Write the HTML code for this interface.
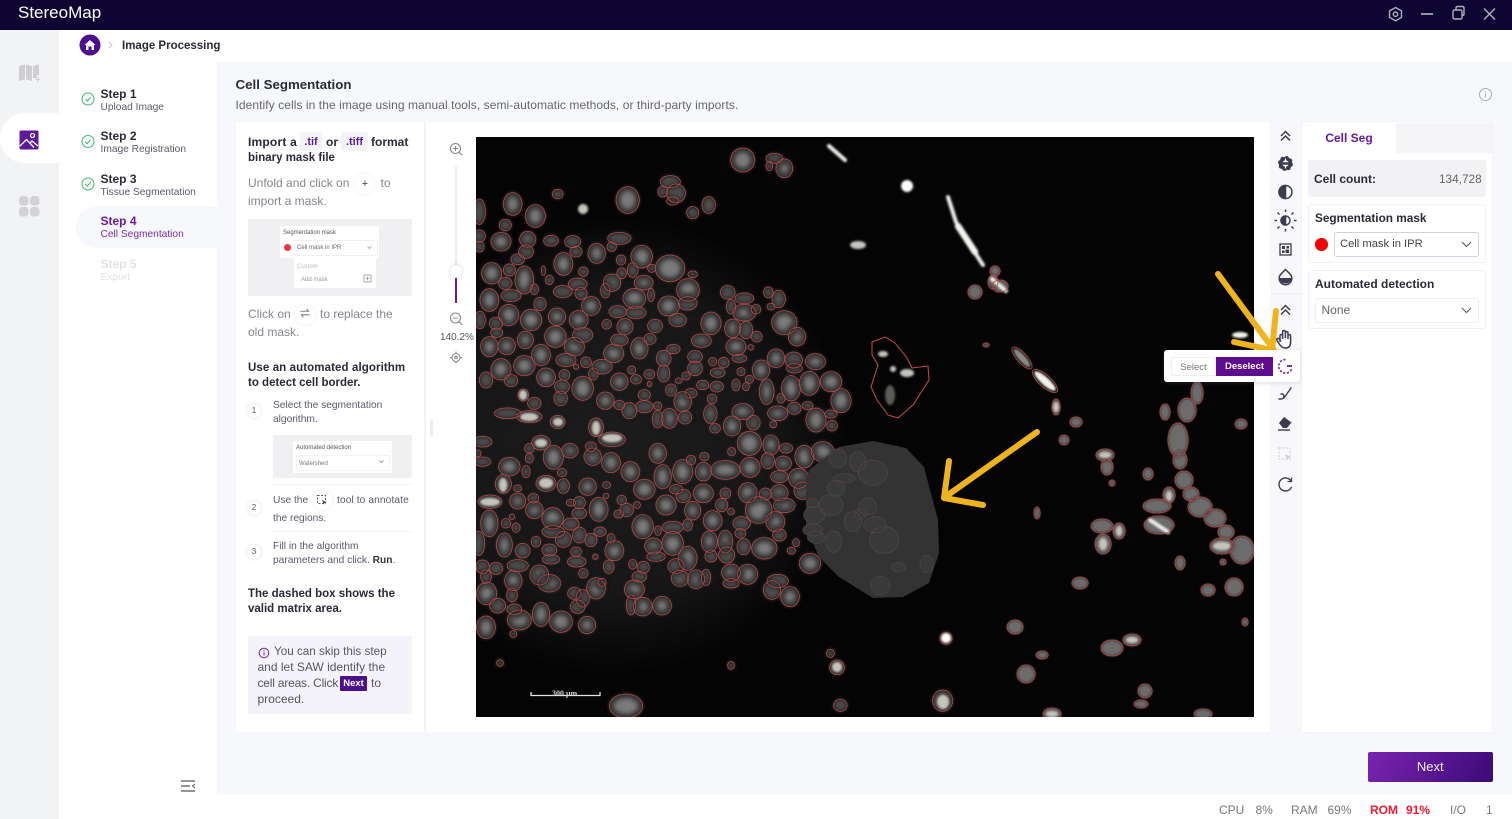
<!DOCTYPE html>
<html><head><meta charset="utf-8"><title>StereoMap</title>
<style>
html,body{margin:0;padding:0;width:1512px;height:819px;overflow:hidden;background:#f7f8fb;font-family:"Liberation Sans","Noto Sans CJK SC",sans-serif;color:#2b2b3a}
div,span,svg{position:absolute}
.t{white-space:nowrap;line-height:16px;font-size:12px}
.b{font-weight:700;color:#2a2a38}
.m{font-size:11.5px}
.g{color:#85858f}
.s{color:#5a5a6a;font-size:10.2px;margin-top:1px}
.n{width:14px;height:14px;border-radius:50%;background:#fff;box-shadow:0 0 3px rgba(80,80,120,.2);font-size:8px;line-height:14px;text-align:center;color:#555}
.c{width:20px;height:20px;border-radius:50%;background:#fff;box-shadow:0 0 3px rgba(80,80,120,.12);text-align:center;line-height:20px;font-size:11px;color:#444}
.p{background:#f4f4f8;color:#5e1a9e;font-weight:700;font-size:11px;text-align:center;line-height:21px;border-radius:2px}
</style></head><body>

<div style="left:0;top:0;width:1512px;height:30px;background:#0f0533"></div>
<div class="t" style="left:18px;top:4px;color:#fff;font-size:17px;line-height:18px">StereoMap</div>
<svg style="left:1380px;top:0" width="132" height="30" fill="none" stroke="#aeaeb8" stroke-width="1.4">
<path d="M15.500 7.500l6 3.400v6.500l-6 3.400-6-3.400v-6.500z"/><circle cx="15.500" cy="14.200" r="2.200"/>
<path d="M41 14h12" stroke-width="1.700"/><rect x="73" y="10" width="9" height="9" rx="1.500"/><path d="M76 10V8q0-1.500 1.500-1.500h5q1.500 0 1.500 1.500v6q0 1.500-1.500 1.500H82"/>
<path d="M104 8.500l11 11M115 8.500l-11 11" stroke-width="1.500"/></svg>

<div style="left:0;top:30px;width:59px;height:789px;background:#f2f3f5"></div>
<div style="left:59px;top:30px;width:158px;height:789px;background:#fff"></div>
<div style="left:59px;top:30px;width:1453px;height:32px;background:#fff"></div>
<div style="left:0;top:113px;width:60px;height:50px;background:#fff;border-radius:25px 0 0 25px"></div>
<svg style="left:17px;top:63px" width="26" height="22" fill="#cfcfd2"><path d="M2 3l6-1.500v15L2 18zM9 1.500l6 1.800v14.700l-6-1.500zM16 3l6-1.500V12h-2v3h-4z"/><path d="M21 14v5M18.500 16.500h5" stroke="#cfcfd2"/></svg>
<svg style="left:19px;top:130px" width="20" height="20"><rect width="19" height="19" rx="1.500" x=".5" y=".5" fill="#5c1a98"/><path d="M1 16L7.500 9.500l7.500 8M11 13l2-2 6 5" fill="none" stroke="#fff" stroke-width="1.300"/><circle cx="13.500" cy="5.500" r="2" fill="none" stroke="#fff" stroke-width="1.200"/></svg>
<svg style="left:19px;top:196px" width="21" height="21" fill="#d3d3d6"><rect width="9.500" height="9.500" rx="3.500"/><rect x="11" width="9.500" height="9.500" rx="3.500"/><rect y="11" width="9.500" height="9.500" rx="3.500"/><rect x="11" y="11" width="9.500" height="9.500" rx="3.500"/></svg>

<svg style="left:79px;top:34px" width="40" height="22"><circle cx="11" cy="11" r="10.500" fill="#4b0f8c"/><path d="M5.500 11L11 6l5.500 5h-1.500v5h-2.500v-3.500h-3V16H7v-5z" fill="#fff"/><path d="M30 8l3 3-3 3" fill="none" stroke="#c8c8cc" stroke-width="1"/></svg>
<div class="t b m" style="left:122px;top:37.500px">Image Processing</div>

<div style="left:76px;top:206px;width:141px;height:42px;background:#f7f8fb;border-radius:21px 0 0 21px"></div>
<svg style="left:80px;top:91px" width="16" height="100" fill="none" stroke="#3fb56f" stroke-width="1"><circle cx="8" cy="8" r="6"/><path d="M5.300 8l2 2 3.500-3.700"/><circle cx="8" cy="50.500" r="6"/><path d="M5.300 50.500l2 2 3.500-3.700"/><circle cx="8" cy="93" r="6"/><path d="M5.300 93l2 2 3.500-3.700"/></svg>
<div class="t b" style="left:100.500px;top:85.500px">Step 1</div><div class="t s" style="left:100.500px;top:98.500px">Upload Image</div>
<div class="t b" style="left:100.500px;top:128px">Step 2</div><div class="t s" style="left:100.500px;top:141px">Image Registration</div>
<div class="t b" style="left:100.500px;top:170.500px">Step 3</div><div class="t s" style="left:100.500px;top:183.500px">Tissue Segmentation</div>
<div class="t b" style="left:100.500px;top:213px;color:#6a1b9a">Step 4</div><div class="t s" style="left:100.500px;top:226px;color:#7b2cb0">Cell Segmentation</div>
<div class="t b" style="left:100.500px;top:255.500px;color:#e2e2e6">Step 5</div><div class="t s" style="left:100.500px;top:268.500px;color:#e2e2e6">Export</div>
<svg style="left:180px;top:779px" width="16" height="14" fill="none" stroke="#555" stroke-width="1.200"><path d="M1 2h14M1 7h9M1 12h14"/><path d="M15 5l-2.500 2 2.500 2" stroke-width="1"/></svg>

<div class="t b" style="left:235.500px;top:76.500px;font-size:13.300px">Cell Segmentation</div>
<div class="t" style="left:235.500px;top:97px;color:#666;letter-spacing:.07px">Identify cells in the image using manual tools, semi-automatic methods, or third-party imports.</div>
<svg style="left:1478px;top:87px" width="15" height="15" fill="none" stroke="#aaa"><circle cx="7.500" cy="7.500" r="6"/><path d="M7.500 6.500v4M7.500 4.200v1.200"/></svg>

<div style="left:236px;top:122px;width:1034px;height:610px;background:#fff"></div>
<div style="left:424px;top:122px;width:1.500px;height:610px;background:#f4f4f7"></div>

<div class="t b" style="left:248px;top:134px;letter-spacing:.2px">Import a</div>
<div class="p" style="left:300px;top:132px;width:22px;height:19px">.tif</div>
<div class="t b" style="left:326px;top:134px">or</div>
<div class="p" style="left:341px;top:132px;width:27px;height:19px">.tiff</div>
<div class="t b" style="left:371px;top:134px">format</div>
<div class="t b m" style="left:248px;top:149.500px">binary mask file</div>
<div class="t g" style="left:248px;top:175px">Unfold and click on</div>
<div class="c" style="left:355px;top:174px">+</div>
<div class="t g" style="left:380.500px;top:175px">to</div>
<div class="t g" style="left:248px;top:193px">import a mask.</div>

<div style="left:248px;top:219px;width:164px;height:77px;background:#f0f0f2"></div>
<div style="left:280px;top:226px;width:99px;height:32px;background:#fff"></div>
<div style="left:294px;top:258px;width:82px;height:30px;background:#fff"></div>
<div style="left:294px;top:240px;width:82px;height:14px;border:1px solid #f0f0f2"></div>
<div style="left:283.500px;top:243.500px;width:7px;height:7px;border-radius:50%;background:#f0324b"></div>
<div class="t" style="left:283px;top:225px;font-size:6px;color:#555">Segmentation mask</div>
<div class="t" style="left:297px;top:239.500px;font-size:6px;color:#666">Cell mask in IPR</div>
<div class="t" style="left:297px;top:258.500px;font-size:6px;color:#bbb">Custom</div>
<div class="t" style="left:301px;top:271.500px;font-size:6px;color:#999">Add mask</div>
<svg style="left:360px;top:243px" width="14" height="42" fill="none" stroke="#999" stroke-width=".8"><path d="M7.500 3.500l2 2 2-2"/><rect x="4" y="32" width="7" height="7"/><path d="M7.500 33.500v4M5.500 35.500h4"/></svg>

<div class="t g" style="left:248px;top:306px">Click on</div>
<div class="c" style="left:295px;top:305px;font-size:10px">⇌</div>
<div class="t g" style="left:320px;top:306px">to replace the</div>
<div class="t g" style="left:248px;top:324px">old mask.</div>

<div class="t b m" style="left:248px;top:359.500px;letter-spacing:.1px">Use an automated algorithm</div>
<div class="t b m" style="left:248px;top:375px">to detect cell border.</div>
<div class="n" style="left:247px;top:404px">1</div>
<div class="t s" style="left:273px;top:397px">Select the segmentation</div>
<div class="t s" style="left:273px;top:411px">algorithm.</div>
<div style="left:273px;top:435px;width:139px;height:43px;background:#f0f0f2"></div>
<div style="left:293px;top:441px;width:99px;height:32px;background:#fff"></div>
<div style="left:296px;top:455px;width:92px;height:14px;border:1px solid #f3f3f5"></div>
<div class="t" style="left:296px;top:440px;font-size:6px;color:#555">Automated detection</div>
<div class="t" style="left:299px;top:456px;font-size:6px;color:#777">Watershed</div>
<svg style="left:378px;top:459px" width="8" height="6" fill="none" stroke="#888" stroke-width=".8"><path d="M1.500 1.500l2 2 2-2"/></svg>
<div style="left:273px;top:484px;width:139px;height:1px;background:#f2f2f4"></div>
<div class="t s" style="left:273px;top:491.500px">Use the</div>
<div class="c" style="left:312px;top:490px"></div>
<svg style="left:316px;top:494px" width="12" height="12" fill="none" stroke="#555" stroke-width="1" stroke-dasharray="2 1.500"><rect x="1.500" y="1.500" width="8" height="8"/><path d="M6 6l4.500 2-2 .7-.7 2z" fill="#444" stroke="none"/></svg>
<div class="t s" style="left:337px;top:491.500px;letter-spacing:.1px">tool to annotate</div>
<div class="n" style="left:247px;top:501px">2</div>
<div class="t s" style="left:273px;top:509.500px">the regions.</div>
<div style="left:273px;top:531px;width:139px;height:1px;background:#f2f2f4"></div>
<div class="n" style="left:247px;top:545px">3</div>
<div class="t s" style="left:273px;top:537.500px">Fill in the algorithm</div>
<div class="t s" style="left:273px;top:551.500px">parameters and click. <b style="color:#333">Run</b>.</div>
<div class="t b m" style="left:248px;top:585.500px">The dashed box shows the</div>
<div class="t b m" style="left:248px;top:601px">valid matrix area.</div>

<div style="left:248px;top:636px;width:164px;height:78px;background:#f5f3fa"></div>
<svg style="left:258px;top:647px" width="12" height="12" fill="none" stroke="#7b2cb0"><circle cx="6" cy="6" r="4.800"/><path d="M6 5v3.500M6 3v1.200"/></svg>
<div class="t" style="left:274px;top:643.500px;color:#55556b;font-size:11.700px">You can skip this step</div>
<div class="t" style="left:257.500px;top:659px;color:#55556b">and let SAW identify the</div>
<div class="t" style="left:257.500px;top:675px;color:#55556b;letter-spacing:-.2px">cell areas. Click</div>
<div style="left:340px;top:676px;width:27px;height:15px;background:#4b0f8c;border-radius:1px;color:#fff;font-size:9.500px;line-height:15px;text-align:center;font-weight:700">Next</div>
<div class="t" style="left:371px;top:675px;color:#55556b">to</div>
<div class="t" style="left:257.500px;top:691px;color:#55556b">proceed.</div>

<svg style="left:445px;top:140px" width="24" height="230" fill="none" stroke="#888" stroke-width="1.100">
<circle cx="10.500" cy="8.500" r="5"/><path d="M14.300 12.300l3 3M8 8.500h5M10.500 6v5"/>
<path d="M11 26v106" stroke="#e6e6ec" stroke-width="1.500"/>
<path d="M11 138v25" stroke="#6a1b9a" stroke-width="2"/>
<circle cx="10.500" cy="178" r="5"/><path d="M14.300 181.800l3 3M8 178h5"/>
<circle cx="11" cy="217.500" r="4"/><circle cx="11" cy="217.500" r="1.200"/><path d="M11 211.500v2M11 221.500v2M5 217.500h2M15 217.500h2"/>
</svg>
<div style="left:450px;top:265px;width:12px;height:12px;border-radius:50%;background:#fff;box-shadow:0 0 3px rgba(100,100,130,.35)"></div>
<div class="t" style="left:440px;top:329.500px;font-size:10px;color:#555">140.2%</div>
<div style="left:429.500px;top:420px;width:3px;height:16px;background:#ececf0;border-radius:2px"></div>

<svg style="left:476px;top:137px;overflow:hidden" width="778" height="579.500" viewBox="476 137 778 579.500">
<defs>
<filter id="bl" x="-10%" y="-10%" width="120%" height="120%"><feGaussianBlur stdDeviation="5"/></filter>
<filter id="bc" x="-10%" y="-10%" width="120%" height="120%"><feGaussianBlur stdDeviation="8"/></filter>
<filter id="bw" x="-30%" y="-30%" width="160%" height="160%"><feGaussianBlur stdDeviation="1.100"/></filter>
<radialGradient id="gl"><stop offset="0" stop-color="#1c1c1d"/><stop offset=".65" stop-color="#171718"/><stop offset="1" stop-color="#040405"/></radialGradient>
<path id="a" d="M800 24a36 36 0 1 0 .1 0zM895 40a25 15 0 1 0 .1 0zM925 57a25 28 0 1 0 .1 0zM880 64a10 14 0 1 0 .1 0zM455 140a35 40 0 1 0 .1 0zM583 107a30 18 0 1 0 .1 0zM600 132a28 28 0 1 0 .1 0zM560 139a14 16 0 1 0 .1 0zM590 171a18 12 0 1 0 .1 0zM245 148a16 14 0 1 0 .1 0zM650 200a18 18 0 1 0 .1 0zM698 170a20 25 0 1 0 .1 0zM110 158a28 34 0 1 0 .1 0zM178 194a30 34 0 1 0 .1 0zM10 177a18 38 0 1 0 .1 0zM88 238a18 17 0 1 0 .1 0zM75 277a30 28 0 1 0 .1 0zM155 274a24 24 0 1 0 .1 0zM150 315a22 20 0 1 0 .1 0zM225 286a22 16 0 1 0 .1 0zM290 287a24 18 0 1 0 .1 0zM300 319a18 16 0 1 0 .1 0zM10 270a18 18 0 1 0 .1 0zM10 304a14 16 0 1 0 .1 0zM125 342a20 16 0 1 0 .1 0zM262 338a28 34 0 1 0 .1 0zM362 310a26 30 0 1 0 .1 0zM407 306a14 14 0 1 0 .1 0zM430 277a35 18 0 1 0 .1 0zM435 345a14 15 0 1 0 .1 0zM497 316a32 34 0 1 0 .1 0zM582 345a44 40 0 1 0 .1 0zM470 368a16 22 0 1 0 .1 0zM527 373a12 12 0 1 0 .1 0zM650 393a14 10 0 1 0 .1 0zM322 381a14 14 0 1 0 .1 0zM202 378a6 14 0 1 0 .1 0zM220 406a12 14 0 1 0 .1 0zM47 368a30 32 0 1 0 .1 0zM100 372a18 18 0 1 0 .1 0zM88 412a20 18 0 1 0 .1 0zM145 378a28 42 0 1 0 .1 0zM175 432a12 16 0 1 0 .1 0zM260 437a28 18 0 1 0 .1 0zM305 414a28 18 0 1 0 .1 0zM315 442a18 18 0 1 0 .1 0zM408 402a26 26 0 1 0 .1 0zM388 430a14 22 0 1 0 .1 0zM437 384a14 16 0 1 0 .1 0zM503 406a28 22 0 1 0 .1 0zM475 445a34 30 0 1 0 .1 0zM525 445a10 20 0 1 0 .1 0zM636 416a34 34 0 1 0 .1 0zM635 470a28 20 0 1 0 .1 0zM578 468a32 30 0 1 0 .1 0zM605 520a26 20 0 1 0 .1 0zM480 500a30 18 0 1 0 .1 0zM425 497a26 18 0 1 0 .1 0zM755 437a22 20 0 1 0 .1 0zM765 478a14 22 0 1 0 .1 0zM805 459a28 16 0 1 0 .1 0zM805 493a35 25 0 1 0 .1 0zM840 494a14 14 0 1 0 .1 0zM877 441a14 16 0 1 0 .1 0zM908 451a20 26 0 1 0 .1 0zM885 490a12 10 0 1 0 .1 0zM925 512a38 36 0 1 0 .1 0zM963 562a26 28 0 1 0 .1 0zM705 516a30 34 0 1 0 .1 0zM770 537a24 28 0 1 0 .1 0zM810 544a20 26 0 1 0 .1 0zM842 574a16 16 0 1 0 .1 0zM676 582a30 20 0 1 0 .1 0zM780 594a30 26 0 1 0 .1 0zM824 614a8 8 0 1 0 .1 0zM790 643a22 12 0 1 0 .1 0zM40 446a28 34 0 1 0 .1 0zM105 449a30 18 0 1 0 .1 0zM192 472a18 20 0 1 0 .1 0zM98 493a30 32 0 1 0 .1 0zM165 508a32 32 0 1 0 .1 0zM243 504a26 26 0 1 0 .1 0zM308 512a28 28 0 1 0 .1 0zM345 470a28 28 0 1 0 .1 0zM392 539a14 14 0 1 0 .1 0zM447 536a24 24 0 1 0 .1 0zM537 538a22 20 0 1 0 .1 0zM60 532a20 18 0 1 0 .1 0zM12 514a16 26 0 1 0 .1 0zM62 564a18 14 0 1 0 .1 0zM148 574a24 26 0 1 0 .1 0zM238 558a32 32 0 1 0 .1 0zM320 563a30 22 0 1 0 .1 0zM295 592a30 28 0 1 0 .1 0zM92 592a26 26 0 1 0 .1 0zM40 590a26 30 0 1 0 .1 0zM430 582a26 18 0 1 0 .1 0zM490 593a26 32 0 1 0 .1 0zM522 581a18 16 0 1 0 .1 0zM592 613a20 14 0 1 0 .1 0zM413 612a30 28 0 1 0 .1 0zM195 613a28 32 0 1 0 .1 0zM270 640a30 20 0 1 0 .1 0zM330 651a16 16 0 1 0 .1 0zM145 647a32 30 0 1 0 .1 0zM75 656a30 32 0 1 0 .1 0zM30 696a20 24 0 1 0 .1 0zM105 704a20 18 0 1 0 .1 0zM210 684a28 28 0 1 0 .1 0zM265 689a16 16 0 1 0 .1 0zM258 720a22 20 0 1 0 .1 0zM254 753a20 22 0 1 0 .1 0zM300 672a8 8 0 1 0 .1 0zM378 658a30 22 0 1 0 .1 0zM352 684a14 18 0 1 0 .1 0zM430 699a26 26 0 1 0 .1 0zM467 678a12 12 0 1 0 .1 0zM480 704a16 14 0 1 0 .1 0zM520 689a16 14 0 1 0 .1 0zM520 724a6 8 0 1 0 .1 0zM563 631a22 24 0 1 0 .1 0zM563 674a18 26 0 1 0 .1 0zM657 632a22 18 0 1 0 .1 0zM657 663a22 22 0 1 0 .1 0zM710 653a12 12 0 1 0 .1 0zM743 652a16 16 0 1 0 .1 0zM725 684a22 14 0 1 0 .1 0zM795 683a12 12 0 1 0 .1 0zM820 706a12 12 0 1 0 .1 0zM780 717a12 18 0 1 0 .1 0zM810 728a10 12 0 1 0 .1 0zM722 724a20 16 0 1 0 .1 0zM680 721a18 14 0 1 0 .1 0zM630 696a12 12 0 1 0 .1 0zM608 714a10 8 0 1 0 .1 0zM585 732a16 18 0 1 0 .1 0zM645 746a18 14 0 1 0 .1 0zM620 755a26 30 0 1 0 .1 0zM855 660a26 30 0 1 0 .1 0zM900 627a26 28 0 1 0 .1 0zM953 636a26 24 0 1 0 .1 0zM955 671a24 14 0 1 0 .1 0zM1018 641a30 24 0 1 0 .1 0zM945 707a28 38 0 1 0 .1 0zM1000 694a30 36 0 1 0 .1 0zM1065 695a32 30 0 1 0 .1 0zM1095 746a30 36 0 1 0 .1 0zM872 717a22 38 0 1 0 .1 0zM915 761a12 14 0 1 0 .1 0zM708 763a14 14 0 1 0 .1 0zM320 709a32 36 0 1 0 .1 0zM388 756a26 26 0 1 0 .1 0zM430 781a16 14 0 1 0 .1 0zM460 788a22 24 0 1 0 .1 0zM505 749a18 16 0 1 0 .1 0zM505 782a26 18 0 1 0 .1 0zM545 786a12 12 0 1 0 .1 0zM580 805a24 30 0 1 0 .1 0zM545 812a16 26 0 1 0 .1 0zM627 812a20 20 0 1 0 .1 0zM703 794a20 28 0 1 0 .1 0zM800 791a32 24 0 1 0 .1 0zM832 826a20 22 0 1 0 .1 0zM905 798a30 22 0 1 0 .1 0zM955 787a20 18 0 1 0 .1 0zM995 785a16 12 0 1 0 .1 0zM1020 804a30 36 0 1 0 .1 0zM1065 810a18 12 0 1 0 .1 0zM1068 841a16 16 0 1 0 .1 0zM768 828a26 30 0 1 0 .1 0zM717 851a16 14 0 1 0 .1 0zM892 843a10 10 0 1 0 .1 0zM175 772a20 18 0 1 0 .1 0zM142 747a16 18 0 1 0 .1 0zM95 804a40 16 0 1 0 .1 0zM160 812a38 18 0 1 0 .1 0zM245 826a22 20 0 1 0 .1 0z"/>
<path id="b" d="M360-6a22 28 0 1 0 .1 0zM408 36a40 22 0 1 0 .1 0zM20 49a28 16 0 1 0 .1 0zM195 46a28 22 0 1 0 .1 0zM160 71a14 14 0 1 0 .1 0zM160 101a12 14 0 1 0 .1 0zM232 76a30 36 0 1 0 .1 0zM282 70a24 22 0 1 0 .1 0zM345 66a16 14 0 1 0 .1 0zM350 84a26 26 0 1 0 .1 0zM405 98a28 30 0 1 0 .1 0zM463 125a28 30 0 1 0 .1 0zM545 70a26 30 0 1 0 .1 0zM560 134a26 36 0 1 0 .1 0zM620 119a30 36 0 1 0 .1 0zM682 127a24 28 0 1 0 .1 0zM645 106a14 14 0 1 0 .1 0zM685 98a14 12 0 1 0 .1 0zM748 122a44 28 0 1 0 .1 0zM767 83a12 12 0 1 0 .1 0zM822 112a30 30 0 1 0 .1 0zM875 98a20 24 0 1 0 .1 0zM922 108a24 22 0 1 0 .1 0zM930 71a20 14 0 1 0 .1 0zM885 45a24 30 0 1 0 .1 0zM820 34a36 36 0 1 0 .1 0zM985 76a28 34 0 1 0 .1 0zM1040 65a34 30 0 1 0 .1 0zM910 152a26 18 0 1 0 .1 0zM968 145a30 30 0 1 0 .1 0zM100 112a32 28 0 1 0 .1 0zM150 137a12 18 0 1 0 .1 0zM20 111a24 14 0 1 0 .1 0zM5 90a10 10 0 1 0 .1 0zM82 164a24 28 0 1 0 .1 0zM210 166a30 24 0 1 0 .1 0zM262 176a18 22 0 1 0 .1 0zM335 174a26 26 0 1 0 .1 0zM392 185a12 10 0 1 0 .1 0zM258 146a14 12 0 1 0 .1 0zM125 195a12 10 0 1 0 .1 0zM505 178a32 30 0 1 0 .1 0zM390 220a8 8 0 1 0 .1 0zM42 225a36 20 0 1 0 .1 0zM125 219a24 24 0 1 0 .1 0zM172 221a16 14 0 1 0 .1 0zM175 244a26 26 0 1 0 .1 0zM230 263a32 32 0 1 0 .1 0zM285 238a14 10 0 1 0 .1 0zM310 230a18 18 0 1 0 .1 0zM368 232a28 36 0 1 0 .1 0zM310 264a22 16 0 1 0 .1 0zM437 226a14 14 0 1 0 .1 0zM452 250a20 20 0 1 0 .1 0zM428 270a14 12 0 1 0 .1 0zM483 245a10 10 0 1 0 .1 0zM570 225a30 30 0 1 0 .1 0zM622 208a22 20 0 1 0 .1 0zM600 194a20 14 0 1 0 .1 0zM650 244a24 28 0 1 0 .1 0zM682 192a30 28 0 1 0 .1 0zM737 235a18 20 0 1 0 .1 0zM748 204a16 16 0 1 0 .1 0zM815 188a28 30 0 1 0 .1 0zM868 204a18 18 0 1 0 .1 0zM910 194a26 24 0 1 0 .1 0zM925 234a32 22 0 1 0 .1 0zM848 230a40 40 0 1 0 .1 0zM765 265a10 10 0 1 0 .1 0zM980 186a26 26 0 1 0 .1 0zM40 270a26 40 0 1 0 .1 0zM90 296a14 14 0 1 0 .1 0zM120 309a12 14 0 1 0 .1 0zM108 282a8 8 0 1 0 .1 0zM8 334a18 36 0 1 0 .1 0zM85 339a24 36 0 1 0 .1 0zM140 370a22 22 0 1 0 .1 0zM180 349a14 16 0 1 0 .1 0zM232 317a34 18 0 1 0 .1 0zM285 294a24 18 0 1 0 .1 0zM262 334a24 24 0 1 0 .1 0zM310 321a20 24 0 1 0 .1 0zM345 340a18 20 0 1 0 .1 0zM372 321a18 14 0 1 0 .1 0zM405 341a12 14 0 1 0 .1 0zM500 284a32 36 0 1 0 .1 0zM546 318a10 14 0 1 0 .1 0zM590 304a32 18 0 1 0 .1 0zM635 297a14 18 0 1 0 .1 0zM710 272a28 30 0 1 0 .1 0zM797 290a26 20 0 1 0 .1 0zM793 326a16 14 0 1 0 .1 0zM898 275a28 30 0 1 0 .1 0zM910 327a20 18 0 1 0 .1 0zM700 333a24 32 0 1 0 .1 0zM748 331a22 34 0 1 0 .1 0zM803 356a20 24 0 1 0 .1 0zM865 353a38 32 0 1 0 .1 0zM960 356a10 12 0 1 0 .1 0zM946 382a12 10 0 1 0 .1 0zM590 334a32 36 0 1 0 .1 0zM532 354a26 24 0 1 0 .1 0zM540 396a28 14 0 1 0 .1 0zM635 379a28 36 0 1 0 .1 0zM705 390a18 18 0 1 0 .1 0zM752 381a24 24 0 1 0 .1 0zM600 416a24 22 0 1 0 .1 0zM612 451a26 24 0 1 0 .1 0zM660 450a26 28 0 1 0 .1 0zM690 448a14 24 0 1 0 .1 0zM415 362a28 30 0 1 0 .1 0zM300 381a16 14 0 1 0 .1 0zM220 372a22 18 0 1 0 .1 0zM225 404a26 14 0 1 0 .1 0zM302 409a28 16 0 1 0 .1 0zM358 402a8 8 0 1 0 .1 0zM398 420a16 20 0 1 0 .1 0zM322 446a14 14 0 1 0 .1 0zM125 419a32 18 0 1 0 .1 0zM20 420a20 20 0 1 0 .1 0zM60 427a20 18 0 1 0 .1 0zM112 452a26 30 0 1 0 .1 0zM30 450a16 20 0 1 0 .1 0zM190 435a28 30 0 1 0 .1 0zM220 464a34 26 0 1 0 .1 0zM360 473a28 32 0 1 0 .1 0zM378 475a12 12 0 1 0 .1 0zM470 419a12 14 0 1 0 .1 0zM502 424a18 18 0 1 0 .1 0zM490 454a22 16 0 1 0 .1 0zM475 480a30 28 0 1 0 .1 0zM500 532a28 28 0 1 0 .1 0zM465 525a14 30 0 1 0 .1 0zM558 529a28 28 0 1 0 .1 0zM32 486a30 34 0 1 0 .1 0zM108 505a16 20 0 1 0 .1 0zM65 535a24 22 0 1 0 .1 0zM115 552a22 16 0 1 0 .1 0zM195 547a26 36 0 1 0 .1 0zM130 570a36 30 0 1 0 .1 0zM255 573a34 32 0 1 0 .1 0zM333 589a26 26 0 1 0 .1 0zM30 588a28 34 0 1 0 .1 0zM112 632a10 10 0 1 0 .1 0zM295 502a20 18 0 1 0 .1 0zM320 509a20 26 0 1 0 .1 0zM305 540a22 20 0 1 0 .1 0zM765 432a28 26 0 1 0 .1 0zM815 433a30 30 0 1 0 .1 0zM765 476a24 14 0 1 0 .1 0zM905 463a32 20 0 1 0 .1 0zM888 482a26 28 0 1 0 .1 0zM942 500a28 30 0 1 0 .1 0zM1002 400a32 30 0 1 0 .1 0zM72 719a10 10 0 1 0 .1 0zM765 724a10 12 0 1 0 .1 0zM1063 688a12 12 0 1 0 .1 0zM1083 720a22 22 0 1 0 .1 0zM1410 637a18 18 0 1 0 .1 0zM1093 838a20 18 0 1 0 .1 0zM1400 810a30 32 0 1 0 .1 0zM450 822a50 36 0 1 0 .1 0z"/>
<path id="h" d="M1145 95a24 30 0 1 0 .1 0zM1190 120a44 38 0 1 0 .1 0zM1105 161a32 14 0 1 0 .1 0zM1080 181a26 24 0 1 0 .1 0zM1065 223a36 32 0 1 0 .1 0zM1175 234a26 26 0 1 0 .1 0zM1153 266a18 16 0 1 0 .1 0zM1130 275a26 30 0 1 0 .1 0zM1197 290a34 24 0 1 0 .1 0zM1225 320a44 40 0 1 0 .1 0zM1015 259a32 26 0 1 0 .1 0zM1010 312a30 18 0 1 0 .1 0zM1020 334a26 18 0 1 0 .1 0zM1073 333a24 32 0 1 0 .1 0zM1213 469a28 28 0 1 0 .1 0zM1267 428a20 14 0 1 0 .1 0zM1352 406a20 26 0 1 0 .1 0zM1085 87a26 28 0 1 0 .1 0zM1010 236a18 14 0 1 0 .1 0z"/>
<path id="r" d="M995 266a5 5 0 1 0 .1 0zM993 275a5 7 0 1 0 .1 0zM975 285a7 7 0 1 0 .1 0zM986 343a3 2 0 1 0 .1 0zM1076 417a6 5 0 1 0 .1 0zM1064 435a5 5 0 1 0 .1 0zM1105 449a9 6 0 1 0 .1 0zM1107 459a6 8 0 1 0 .1 0zM1112 480a3 3 0 1 0 .1 0zM1148 468a5 6 0 1 0 .1 0zM1197 382a6 11 0 1 0 .1 0zM1187 398a9 12 0 1 0 .1 0zM1165 404a5 8 0 1 0 .1 0zM1241 419a6 5 0 1 0 .1 0zM1178 423a10 17 0 1 0 .1 0zM1180 451a7 9 0 1 0 .1 0zM1184 471a9 9 0 1 0 .1 0zM1191 487a8 7 0 1 0 .1 0zM1200 497a12 10 0 1 0 .1 0zM1215 509a11 9 0 1 0 .1 0zM1226 525a8 7 0 1 0 .1 0zM1222 538a12 8 0 1 0 .1 0zM1242 536a12 14 0 1 0 .1 0zM1223 559a3 3 0 1 0 .1 0zM1169 487a6 8 0 1 0 .1 0zM1157 499a14 7 0 1 0 .1 0zM1159 516a15 9 0 1 0 .1 0zM1102 519a11 7 0 1 0 .1 0zM1119 523a6 8 0 1 0 .1 0zM1103 534a8 10 0 1 0 .1 0zM1180 556a5 7 0 1 0 .1 0zM1080 577a8 6 0 1 0 .1 0zM1208 584a7 6 0 1 0 .1 0zM1234 578a9 9 0 1 0 .1 0zM1245 618a3 4 0 1 0 .1 0zM1037 507a3 6 0 1 0 .1 0zM1015 620a8 7 0 1 0 .1 0zM1112 640a11 8 0 1 0 .1 0zM1132 634a9 6 0 1 0 .1 0zM1042 651a6 4 0 1 0 .1 0zM1026 665a9 9 0 1 0 .1 0zM1145 684a7 7 0 1 0 .1 0zM1141 700a7 4 0 1 0 .1 0zM1052 708a9 6 0 1 0 .1 0zM1203 709a9 5 0 1 0 .1 0zM1056 399a4 8 0 1 0 .1 0zM1000 280a8 6 0 1 0 .1 0z"/>
</defs>

<rect x="476" y="137" width="778" height="580" fill="#040405"/>
<ellipse cx="610" cy="445" rx="240" ry="230" fill="url(#gl)"/>
<g transform="translate(476 140) scale(.33333)">
<use href="#a" fill="#4a4a4a" stroke="#1a1a1a" stroke-width="8" filter="url(#bl)"/>
<use href="#a" fill="#7c7c7c" stroke="#000" stroke-width="26" filter="url(#bc)" style="mix-blend-mode:lighten"/>
</g>
<g transform="translate(476 420) scale(.33333)">
<use href="#b" fill="#4a4a4a" stroke="#1a1a1a" stroke-width="8" filter="url(#bl)"/>
<use href="#b" fill="#7c7c7c" stroke="#000" stroke-width="26" filter="url(#bc)" style="mix-blend-mode:lighten"/>
</g>
<use href="#r" fill="#6c6c6c" stroke="#1a1a1a" stroke-width="1.500" filter="url(#bw)"/>

<g fill="#c4c4bc" filter="url(#bw)">
<path d="M583 204a5 5 0 1 0 .1 0zM858 241a8 4 0 1 0 .1 0zM523 390a4 5 0 1 0 .1 0zM529 413a9 4 0 1 0 .1 0zM558 418a5 4 0 1 0 .1 0zM596 421a4 7 0 1 0 .1 0zM612 434a10 4 0 1 0 .1 0zM541 439a6 4 0 1 0 .1 0zM503 478a4 7 0 1 0 .1 0zM546 478a7 5 0 1 0 .1 0zM490 498a10 4 0 1 0 .1 0zM837 662a5 5 0 1 0 .1 0zM943 695a6 7 0 1 0 .1 0zM1105 452a6 3 0 1 0 .1 0zM1119 526a3 5 0 1 0 .1 0zM1103 538a4 6 0 1 0 .1 0zM1169 491a3 5 0 1 0 .1 0zM1222 542a9 4 0 1 0 .1 0zM1132 637a6 3 0 1 0 .1 0zM1052 711a6 3 0 1 0 .1 0zM1056 402a3 5 0 1 0 .1 0zM883 351a5 3 0 1 0 .1 0zM907 369a7 4 0 1 0 .1 0zM893 366a3 3 0 1 0 .1 0z"/>
<path d="M946 633a5 5 0 1 0 .1 0zM907 180a6 6 0 1 0 .1 0z" fill="#fff"/>
<path d="M890 385a5 10 0 1 0 .1 0z" fill="#5c5c54"/>
<path d="M1240 332a8 3 0 1 0 .1 0z" fill="#f2f2ec"/>
<path d="M948 197L956 222L970 245L983 265M829 146L845 160M992 279L1006 291M1150 520L1168 532" fill="none" stroke="#efefea" stroke-width="4" stroke-linecap="round" stroke-linejoin="round"/>
<path d="M958 226L975 252" fill="none" stroke="#f5f5f0" stroke-width="6.500" stroke-linecap="round"/>
<ellipse cx="1022" cy="358" rx="12" ry="3.500" transform="rotate(48 1022 358)" fill="#8a8a86"/>
<ellipse cx="1045" cy="381" rx="14" ry="4" transform="rotate(42 1045 381)" fill="#f2f2ec"/>
</g>

<g fill="none" stroke="#bb4b49" stroke-width=".8">
<g transform="translate(476 140) scale(.33333)"><use href="#a" stroke-width="2.300"/></g>
<g transform="translate(476 420) scale(.33333)"><use href="#b" stroke-width="2.300"/></g>
<use href="#r"/>
<ellipse cx="1022" cy="358" rx="14" ry="5" transform="rotate(48 1022 358)"/>
<ellipse cx="1045" cy="381" rx="16" ry="6" transform="rotate(42 1045 381)"/>
<path d="M872 342L885 337L895 343L907 358L912 368L928 366L929 380L913 405L898 418L888 415L877 400L871 387L878 365L872 355Z" stroke="#c74e4a" stroke-width="1"/>
</g>

<path d="M809 470L839 447L873 441L906 448L924 467L938 520L939 553L929 583L903 597L873 598L839 577L819 557L806 527L806 487Z" fill="#333"/>
<g transform="translate(476 420) scale(.33333)" fill="#393939" stroke="#574545" stroke-width="2"><use href="#h"/></g>

<path d="M531 692v3.500h69V692" fill="none" stroke="#e4e4ea" stroke-width="1.300"/>
<text x="552" y="696" font-family="Liberation Serif,serif" font-size="8" font-weight="700" fill="#d8d8dc">300 μm</text>

<g fill="none" stroke="#efb31d" stroke-width="6" stroke-linecap="round" stroke-linejoin="round">
<path d="M1037 432L945 497M949 461L944 498L983 505"/>
</g>
</svg>

<div style="left:1270px;top:122px;width:32px;height:610px;background:#f8f8fc"></div>
<div style="left:1270px;top:293px;width:32px;height:1px;background:#ededf2"></div>
<div style="left:1302px;top:122px;width:190px;height:610px;background:#fff;box-shadow:0 0 1px #dcdce4"></div>

<svg style="left:1270px;top:122px;overflow:visible" width="32" height="380" fill="none" stroke="#3b3b52" stroke-width="1.500">
<path d="M11 14l4.500-4.500L20 14M11 18.500l4.500-4.500 4.500 4.500"/>
<circle cx="15.500" cy="41.500" r="5" stroke-width="3.500"/><circle cx="15.500" cy="41.500" r="6.500" stroke-width="2" stroke-dasharray="2.500 2.600"/><path d="M15.500 36.500v10" stroke="#fff" stroke-width="1"/><path d="M12 41.500h7" stroke="#3b3b52" stroke-width="2.500"/>
<circle cx="15.500" cy="70" r="6.500"/><path d="M15.500 63.500a6.500 6.500 0 0 0 0 13z" fill="#3b3b52"/>
<circle cx="15.500" cy="98.500" r="4.500"/><path d="M15.500 94a4.500 4.500 0 0 0 0 9z" fill="#3b3b52"/><path d="M15.500 90v-2.500M15.500 107v2.500M7 98.500H4.500M24 98.500h2.500M9.500 92.500l-2-2M21.500 104.500l2 2M9.500 104.500l-2 2M21.500 92.500l2-2"/>
<rect x="10" y="122" width="11" height="11" stroke-width="1.300"/><path d="M12 124h3v3h-3zM15.500 127.500h3.500v3.500h-3.500zM12 128.500h2.500v2.500H12zM16.500 124h2.500v2.500h-2.500z" fill="#3b3b52" stroke="none"/>
<path d="M15.500 147.500l-4.300 4.300a6.300 6.300 0 1 0 8.600 0z"/><path d="M9.500 156h12a6 5.500 0 0 1-12 0z" fill="#3b3b52" stroke="none"/>
<path d="M11 188l4.500-4.500L20 188M11 192.500l4.500-4.500 4.500 4.500"/>
<path d="M10 220v-6q0-1.500 1.300-1.500t1.300 1.500v3M12.600 216v-6q0-1.500 1.400-1.500t1.400 1.500v6M15.400 216v-5q0-1.400 1.300-1.400t1.300 1.400v6M18 216v-2q0-1.400 1.300-1.400t1.300 1.400v6q0 6-5.100 6-3.500 0-5.500-3l-3-4.500q-.8-1.500.5-2 1.200-.4 2 .8l1.500 2"/>
</svg>

<svg style="left:1160px;top:260px" width="130" height="100" fill="none" stroke="#efb31d" stroke-width="6" stroke-linecap="round" stroke-linejoin="round"><path d="M58 14L114 90M116 51L112 90L74 82"/></svg>

<div style="left:1164px;top:350px;width:136px;height:32px;background:#fff;border-radius:3px;box-shadow:0 1px 4px rgba(120,120,150,.25)"></div>
<div style="left:1171px;top:357px;width:45px;height:19px;border:1px solid #efeff2;box-sizing:border-box;border-radius:2px 0 0 2px;color:#777;font-size:9.500px;line-height:19px;text-align:center">Select</div>
<div style="left:1216px;top:357px;width:57px;height:19px;background:#5f0b8f;color:#fff;font-size:9.500px;line-height:20px;text-align:center;font-weight:700">Deselect</div>
<svg style="left:1276px;top:357px" width="18" height="18" fill="none" stroke="#7b2cb0" stroke-width="1.700"><path d="M9.500 2.500a6.800 6.800 0 1 0 6.200 9.500" stroke-dasharray="2.200 1.600"/><path d="M11 9h5" stroke="#5f0b8f"/></svg>
<svg style="left:1276px;top:385px" width="18" height="110" fill="none" stroke="#3b3b52" stroke-width="1.400">
<path d="M3 14q5 .5 5-2.500t-3-2.500M8 13L15 3" stroke-linecap="round"/>
<path d="M3 38l5-6 7.500 5.500-4.500 5.500h-4z" fill="#3b3b52" stroke="none"/><path d="M2 45h12"/>
<rect x="3" y="63" width="11" height="11" stroke="#d8d8de" stroke-dasharray="2 1.500"/><path d="M9 69l6 3-2.500 1-1 2.500z" fill="#cfcfd6" stroke="none"/>
<path d="M15 96a6.500 6.500 0 1 0 .5 6"/><path d="M15.500 92.500v4h-4" stroke-width="1.300"/>
</svg>

<div style="left:1302px;top:123px;width:94px;height:30px;background:#fff;text-align:center;line-height:30px;font-weight:700;font-size:12px;color:#6a1b9a">Cell Seg</div>
<div style="left:1396px;top:123px;width:96px;height:30px;background:#f5f5f7"></div>
<div style="left:1308px;top:160px;width:178px;height:37px;background:#f2f2f4;border-radius:3px"></div>
<div class="t b" style="left:1314px;top:171px">Cell count:</div>
<div class="t" style="left:1439px;top:171px;color:#666;font-size:11.800px">134,728</div>
<div style="left:1308px;top:204px;width:178px;height:59px;border:1px solid #f0f0f4;box-sizing:border-box;border-radius:3px"></div>
<div class="t b" style="left:1315px;top:210px;font-size:11.800px">Segmentation mask</div>
<div style="left:1315px;top:238px;width:12.500px;height:12.500px;border-radius:50%;background:#f40000"></div>
<div style="left:1334px;top:232px;width:144.500px;height:24.500px;border:1px solid #d0d1da;box-sizing:border-box;border-radius:3px"></div>
<div class="t" style="left:1340px;top:236px;color:#444;font-size:11.200px">Cell mask in IPR</div>
<div style="left:1308px;top:270px;width:178px;height:59px;border:1px solid #f0f0f4;box-sizing:border-box;border-radius:3px"></div>
<div class="t b" style="left:1315px;top:276px">Automated detection</div>
<div style="left:1315px;top:298px;width:163.500px;height:24.500px;border:1px solid #efeff3;box-sizing:border-box;border-radius:3px"></div>
<div class="t" style="left:1321.500px;top:302px;color:#666">None</div>
<svg style="left:1460px;top:240px" width="14" height="76" fill="none" stroke="#555" stroke-width="1"><path d="M2 2l4.500 4.500L11 2M2 68l4.500 4.500L11 68"/></svg>

<div style="left:59px;top:795px;width:1453px;height:24px;background:#fff"></div>
<div style="left:1368px;top:752px;width:124.500px;height:30px;border-radius:2px;background:linear-gradient(115deg,#7a24b0,#3c0a78);color:#f1eaf8;font-size:13px;line-height:30px;text-align:center">Next</div>
<div class="t" style="left:1219px;top:801.500px;color:#777">CPU</div>
<div class="t" style="left:1255.500px;top:801.500px;color:#777">8%</div>
<div class="t" style="left:1291px;top:801.500px;color:#777">RAM</div>
<div class="t" style="left:1327.500px;top:801.500px;color:#777">69%</div>
<div class="t" style="left:1370px;top:801.500px;color:#f21a2b;font-weight:700">ROM</div>
<div class="t" style="left:1406px;top:801.500px;color:#f21a2b;font-weight:700">91%</div>
<div class="t" style="left:1450px;top:801.500px;color:#777">I/O</div>
<div class="t" style="left:1486px;top:801.500px;color:#777">1</div>
</body></html>
